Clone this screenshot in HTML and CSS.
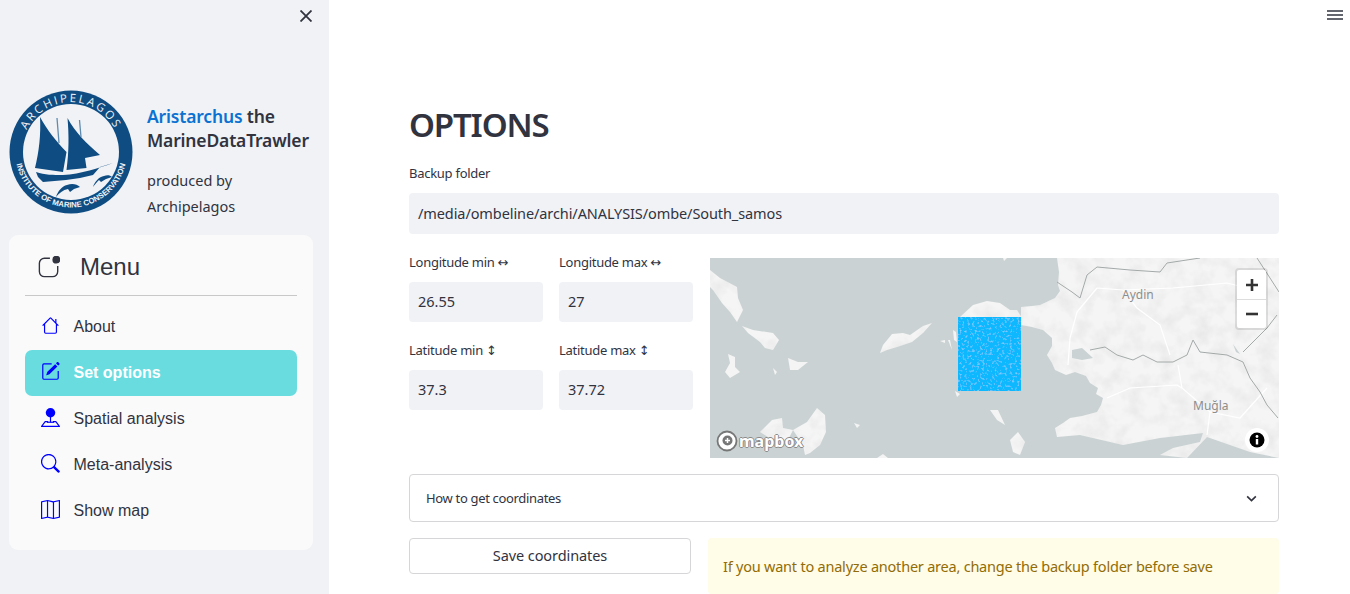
FILE: index.html
```html
<!DOCTYPE html>
<html lang="en">
<head>
    <meta charset="UTF-8">
    <title>Aristarchus</title>
    <link rel="stylesheet" href="styles.css">
</head>
<body>
    <div class="app">
        <aside class="sidebar">
            <div class="side-top">
                <svg class="close" viewBox="0 0 12 12"><path d="M.5 .5 L11.500 11.500 M11.500 .5 L.5 11.500"/></svg>
            </div>
            <div class="brand">
                <svg class="logo" viewBox="0 0 124 124">
                    <defs>
                        <path id="arcTop" d="M13.800 70 A49 49 0 1 1 110.200 70"/>
                        <path id="arcBottom" d="M7 72 A56 56 0 0 0 117 72"/>
                    </defs>
                    <circle cx="62" cy="62" r="61.500" fill="#0e4c82"/>
                    <circle cx="62" cy="62" r="48" fill="#f0f2f6"/>
                    <text class="logo-top"><textPath href="#arcTop" startOffset="50%" text-anchor="middle">ARCHIPELAGOS</textPath></text>
                    <text class="logo-bottom"><textPath href="#arcBottom" startOffset="50%" text-anchor="middle">INSTITUTE OF MARINE CONSERVATION</textPath></text>
                    <path fill="#0e4c82" d="M31 27 C38 40 48 52 57.500 62 L54 82 L26 78 C30 62 32 45 31 27Z"/>
                    <path fill="#0e4c82" d="M58.500 28 C66 42 78 54 91 65 L76 68 L77.500 78 L57.500 80 C60 62 60 45 58.500 28Z"/>
                    <path d="M48 28 L50 53 M70.500 30 L72 47" stroke="#5f8bb0" stroke-width="1.300" fill="none"/>
                    <path fill="#0e4c82" d="M27 82 C36 85 44 85 54 85 C72 84 90 78 104 73 L91 77 L84 85 L71 88 L57 90 L34 92 L29 87Z"/>
                    <path fill="#0e4c82" d="M47 107 C49 101 53 96 58 95 C63 93 68 94 71 97 L65 99 L61 102 L59 99 C54 100 50 103 47 107Z"/>
                    <path fill="#0e4c82" d="M84 97 C86 91 90 87 95 86 C98 85 101 85 103 87 L97 89 L92 92 L90 90 C88 92 86 94 84 97Z"/>
                </svg>
                <div class="brand-text">
                    <h4><span class="blue">Aristarchus</span> <span>the</span><br><span>MarineDataTrawler</span></h4>
                    <p>produced by Archipelagos</p>
                </div>
            </div>
            <nav class="menu">
                <div class="menu-title">
                    <svg class="menu-icon" viewBox="0 0 24 24"><path d="M13 2.500 H7 A5.500 5.500 0 0 0 1.500 8 V17 A5.500 5.500 0 0 0 7 22.500 H16 A5.500 5.500 0 0 0 21.500 17 V11"/><circle cx="20" cy="4" r="4.300" class="dot"/></svg>
                    <span>Menu</span>
                </div>
                <hr class="menu-line">
                <a class="item">
                    <svg viewBox="0 0 16 16"><path d="M8.700 1.500a1 1 0 0 0-1.400 0L1 7.800l.7.7.8-.8V13.500A1.500 1.500 0 0 0 4 15h8a1.500 1.500 0 0 0 1.500-1.500V7.700l.8.8.7-.7-2-2V2.500h-1v2.300ZM12.500 6.700V13.500a.5.5 0 0 1-.5.5H4a.5.5 0 0 1-.5-.5V6.700L8 2.200Z"/></svg>
                    <span>About</span>
                </a>
                <a class="item active">
                    <svg viewBox="0 0 16 16"><path d="M15.500 1.200a.6.6 0 0 1 0 .8l-1 1-1.900-1.900 1-1a.6.6 0 0 1 .8 0ZM13.800 3.700 11.900 1.800 5.400 8.300a.5.5 0 0 0-.1.200l-.8 2.300c-.06.2.13.400.3.300l2.300-.8a.5.5 0 0 0 .2-.1Z"/><path d="M1 13.500A1.500 1.500 0 0 0 2.500 15h11a1.500 1.500 0 0 0 1.500-1.500v-6h-1v6a.5.5 0 0 1-.5.5h-11a.5.5 0 0 1-.5-.5v-11a.5.5 0 0 1 .5-.5H9V1H2.500A1.500 1.500 0 0 0 1 2.500Z"/></svg>
                    <span>Set options</span>
                </a>
                <a class="item">
                    <svg viewBox="0 0 16 16"><circle cx="8" cy="4" r="4"/><path d="M7.500 7h1v5h-1Z"/><path d="M3.100 11.200a.5.5 0 0 1 .4-.2H6v1H3.750L1.500 15h13l-2.250-3H10v-1h2.500a.5.5 0 0 1 .4.2l3 4a.5.5 0 0 1-.4.8H.5a.5.5 0 0 1-.4-.8Z"/><path d="M5 11.500h6v1H5Z"/></svg>
                    <span>Spatial analysis</span>
                </a>
                <a class="item">
                    <svg viewBox="0 0 16 16"><path d="M11.700 10.300a6.500 6.500 0 1 0-1.400 1.400l3.900 3.850a1 1 0 0 0 1.400-1.400l-3.900-3.850ZM12 6.500a5.500 5.500 0 1 1-11 0 5.500 5.500 0 0 1 11 0Z"/></svg>
                    <span>Meta-analysis</span>
                </a>
                <a class="item">
                    <svg viewBox="0 0 16 16"><path d="M15.800.1a.5.5 0 0 1 .2.4v14a.5.5 0 0 1-.4.5l-5 1a.5.5 0 0 1-.2 0L5.500 15 .6 16a.5.5 0 0 1-.6-.5v-14a.5.5 0 0 1 .4-.5l5-1a.5.5 0 0 1 .2 0l4.900 1 4.900-1a.5.5 0 0 1 .4.1ZM10 2 6 1.100v13L10 15ZM11 15l4-.8V1.100l-4 .8ZM5 14.100v-13l-4 .8v13Z"/></svg>
                    <span>Show map</span>
                </a>
            </nav>
        </aside>

        <main class="main">
            <svg class="burger" viewBox="0 0 16 12"><path d="M0 2H16M0 6H16M0 10H16"/></svg>
            <h1>OPTIONS</h1>
            <label class="field-label">Backup folder</label>
            <div class="input wide">/media/ombeline/archi/ANALYSIS/ombe/South_samos</div>

            <div class="coords">
                <div class="coord-form">
                    <div class="field">
                        <label class="field-label">Longitude min <span class="arrow">↔</span></label>
                        <div class="input">26.55</div>
                    </div>
                    <div class="field">
                        <label class="field-label">Longitude max <span class="arrow">↔</span></label>
                        <div class="input">27</div>
                    </div>
                    <div class="field">
                        <label class="field-label">Latitude min <span class="arrow">↕</span></label>
                        <div class="input">37.3</div>
                    </div>
                    <div class="field">
                        <label class="field-label">Latitude max <span class="arrow">↕</span></label>
                        <div class="input">37.72</div>
                    </div>
                </div>
                <div class="map">
                    <svg class="map-svg" viewBox="0 0 569 200">
                        <defs>
                            <filter id="hills" x="0" y="0" width="100%" height="100%">
                                <feTurbulence type="fractalNoise" baseFrequency="0.06" numOctaves="3" seed="7"/>
                                <feColorMatrix values="0 0 0 0 0.55  0 0 0 0 0.55  0 0 0 0 0.55  0.6 0 0 0 -0.24"/>
                                <feComposite in2="SourceAlpha" operator="in" result="shade"/>
                                <feMerge><feMergeNode in="SourceGraphic"/><feMergeNode in="shade"/></feMerge>
                            </filter>
                            <filter id="speck" x="0" y="0" width="100%" height="100%">
                                <feTurbulence type="fractalNoise" baseFrequency="0.4" numOctaves="2" seed="3"/>
                                <feColorMatrix values="0 0 0 0 1  0 0 0 0 1  0 0 0 0 1  0.8 0 0 0 -0.44"/>
                                <feComposite in2="SourceAlpha" operator="in" result="dots"/>
                                <feMerge><feMergeNode in="SourceGraphic"/><feMergeNode in="dots"/></feMerge>
                            </filter>
                            <filter id="soft"><feGaussianBlur stdDeviation="0.4"/></filter>
                        </defs>
                        <rect width="569" height="200" fill="#cad2d3"/>
                        <!-- mainland -->
                        <g filter="url(#hills)">
                            <path fill="#f5f5f5" d="M347 0 L569 0 L569 200 L540 194 L497 179 L477 200 L450 197 L463 190 L490 184 L493 175 L450 180 L413 187 L370 177 L347 179 L345 170 L353 165 L360 160 L372 158 L387 154 L391 147 L393 140 L386 136 L388 130 L380 125 L376 118 L365 114 L356 117 L345 112 L342 105 L337 97 L342 88 L342 80 L333 72 L322 69 L311 67 L311 49 L322 48 L330 47 L345 40 L350 33 L348 27 L349 14Z"/>
                            <path fill="#f5f5f5" d="M250 59 L263 47 L277 43 L290 45 L300 52 L307 52 L312 60Z"/>
                            <path fill="#f5f5f5" d="M0 12 L10 20 L27 29 L28 40 L33 52 L27 64 L20 54 L12 45 L3 32 L0 29Z"/>
                            <path fill="#f5f5f5" d="M32 68 L43 72 L63 75 L69 82 L63 92 L55 90 L50 84 L38 75Z"/>
                            <path fill="#f5f5f5" d="M170 95 L173 87 L182 76 L193 75 L200 77 L213 68 L222 65 L213 75 L202 84 L187 89 L177 92Z"/>
                            <path fill="#f5f5f5" d="M95 197 L93 187 L83 172 L97 164 L107 150 L115 157 L116 174 L110 187 L100 195Z"/>
                            <path fill="#f5f5f5" d="M50 174 L62 162 L72 160 L73 170 L83 172 L77 184 L58 179Z"/>
                            <path fill="#f5f5f5" d="M300 182 L308 174 L315 184 L310 197 L303 194Z"/>
                        </g>
                        <path fill="#f4f4f4" d="M18 96 L25 99 L25 109 L30 114 L20 120 L15 114 L20 105Z"/>
                        <path fill="#f4f4f4" d="M78 100 L88 104 L98 104 L88 112 L80 112Z M63 110 L67 114 L65 117Z"/>
                        <path fill="#f4f4f4" d="M230 83 L235 82 L235 85Z M238 82 L240 82 L242 92Z M243 72 L246 74 L247 84 L244 82Z"/>
                        <path fill="#f4f4f4" d="M144 165 L150 167 L147 170Z M167 200 L173 196 L178 200Z M293 0 L297 0 L294 3Z"/>
                        <path fill="#f4f4f4" d="M280 152 L288 152 L295 167 L287 162Z M245 133 L250 136 L247 139Z"/>
                        <path fill="#cad2d3" d="M362 92 L372 90 L383 100 L372 102 L362 100Z M523 86 L530 96 L526 94Z"/>
                        <!-- roads and borders -->
                        <g filter="url(#soft)">
                            <path fill="none" stroke="#ffffff" stroke-width="1.200" d="M387 30 L413 32 L427 50 L450 67 L460 97 M463 30 L517 25 L545 32 M413 32 L463 30 M367 54 L360 80 L358 107 M387 30 L367 54 M468 107 L472 130 L500 154 L497 177 M397 140 L420 130 L467 127 L472 130 M500 154 L530 160 L557 130"/>
                            <path fill="none" stroke="#a4a9a9" stroke-width="1" d="M347 24 L362 34 L370 40 L377 17 L387 9 L420 12 L450 14 L457 5 L490 0 M547 0 L560 20 L569 34 M380 92 L395 89 L407 97 L423 102 L433 97 L447 104 L463 104 L477 97 L483 82 L490 94 L517 97 L533 104 L540 120 L550 134 L557 147 L568 160 M533 94 L557 70 L567 57"/>
                        </g>
                        <!-- survey area -->
                        <rect x="248" y="59" width="63" height="74" fill="#08b8ff" filter="url(#speck)"/>
                        <text class="city" x="412" y="41">Aydin</text>
                        <text class="city" x="483" y="152">Muğla</text>
                    </svg>
                    <div class="zoom">
                        <div class="zoom-btn"><svg viewBox="0 0 12 12"><path d="M0 6H12M6 0V12"/></svg></div>
                        <div class="zoom-btn"><svg viewBox="0 0 12 12"><path d="M0 6H12"/></svg></div>
                    </div>
                    <div class="mapbox">
                        <svg viewBox="0 0 22 22"><circle cx="11" cy="11" r="9.500" fill="#fff" stroke="#777" stroke-width="1.800"/><circle cx="11.500" cy="10.500" r="5" fill="#777"/><path d="M11.500 8v5M9 10.500h5" stroke="#fff" stroke-width="1.500"/></svg>
                        <span>mapbox</span>
                    </div>
                    <div class="map-info">
                        <svg viewBox="0 0 20 20"><circle cx="10" cy="10" r="7.500" fill="#000"/><rect x="8.800" y="9" width="2.400" height="5.500" fill="#fff"/><circle cx="10" cy="6.500" r="1.400" fill="#fff"/></svg>
                    </div>
                </div>
            </div>

            <div class="expander">
                <span>How to get coordinates</span>
                <svg viewBox="0 0 12 12"><path d="M2 4 L6 8 L10 4"/></svg>
            </div>

            <div class="actions">
                <button class="save" type="button">Save coordinates</button>
                <div class="notice">If you want to analyze another area, change the backup folder before save</div>
            </div>
        </main>
    </div>
</body>
</html>
```

FILE: styles.css
```css
* {
    box-sizing: border-box;
    margin: 0;
    padding: 0;
}
html, body {
    height: 100%;
    overflow: hidden;
    background: white;
    font-family: "Noto Sans", sans-serif;
    color: #31333f;
}
.app {
    display: flex;
    height: 594px;
}

/* sidebar */
.sidebar {
    width: 329px;
    flex: none;
    background: #f0f2f6;
    padding: 0 16px 0 9px;
}
.side-top {
    height: 90px;
    display: flex;
    justify-content: flex-end;
    padding-top: 10px;
}
.close {
    width: 12px;
    height: 12px;
    margin-right: 1px;
}
.close path {
    stroke: #31333f;
    stroke-width: 1.800;
    fill: none;
}
.brand {
    display: flex;
    gap: 14px;
    height: 145px;
}
.logo {
    width: 124px;
    height: 124px;
    flex: none;
}
.logo-top {
    font: 400 11.500px "Open Sans", sans-serif;
    fill: #f0f2f6;
    letter-spacing: 2.200px;
}
.logo-bottom {
    font: bold 7.800px "Liberation Sans", sans-serif;
    fill: #f0f2f6;
}
.brand-text h4 {
    font-size: 17.500px;
    font-weight: 600;
    line-height: 24px;
    margin-top: 14px;
    letter-spacing: -0.17px;
}
.blue {
    color: #0b72d1;
}
.brand-text p {
    font-size: 14.500px;
    line-height: 26px;
    margin-top: 15px;
    width: 110px;
}
.menu {
    width: 304px;
    height: 315px;
    background: #fafafa;
    border-radius: 9px;
    padding: 16px;
    font-family: "Liberation Sans", sans-serif;
}
.menu-title {
    display: flex;
    align-items: center;
    gap: 20px;
    height: 31px;
    padding-left: 13px;
    font-size: 24px;
}
.menu-icon {
    width: 22px;
    height: 22px;
}
.menu-icon path {
    fill: none;
    stroke: #31333f;
    stroke-width: 1.500;
}
.menu-icon .dot {
    fill: #31333f;
}
.menu-line {
    border: 0;
    border-top: 1px solid #c8c8c8;
    margin: 13px 0 8px;
}
.item {
    display: flex;
    align-items: center;
    gap: 13px;
    height: 46px;
    padding-left: 16px;
    font-size: 16px;
    border-radius: 7px;
}
.item svg {
    width: 19px;
    height: 19px;
    fill: blue;
    margin-top: -4px;
}
.item span {
    margin-left: 0.5px;
}
.item.active {
    background: #69dce0;
    color: white;
    font-weight: bold;
}

/* main */
.main {
    flex: 1;
    padding: 0 71px 0 80px;
    position: relative;
}
.burger {
    position: absolute;
    top: 9px;
    right: 7px;
    width: 16px;
    height: 12px;
}
.burger path {
    stroke: #31333f;
    stroke-width: 1.500;
    fill: none;
}
h1 {
    font-size: 33px;
    font-weight: 600;
    line-height: 44px;
    margin-top: 103px;
    letter-spacing: -1.15px;
}
.field-label {
    display: block;
    font-size: 13px;
    line-height: 18px;
    margin-top: 17px;
    letter-spacing: -0.27px;
}
.arrow {
    font: 13px "DejaVu Sans", sans-serif;
}
.input {
    background: #f0f2f6;
    border-radius: 4px;
    height: 40px;
    line-height: 39px;
    padding-left: 9px;
    font-size: 14.500px;
    margin-top: 11px;
}
.input.wide {
    height: 41px;
    line-height: 41px;
    letter-spacing: -0.09px;
}
.coords {
    display: flex;
    margin-top: 24px;
    gap: 17px;
}
.coord-form {
    width: 284px;
    flex: none;
    display: grid;
    grid-template-columns: 134px 134px;
    column-gap: 16px;
    row-gap: 19px;
    align-content: start;
    margin-top: -5px;
}
.coord-form .field-label {
    margin-top: 0;
}
.map {
    flex: 1;
    height: 200px;
    position: relative;
}
.map-svg {
    display: block;
    width: 100%;
    height: 100%;
}
.city {
    font: 12px "Noto Sans", sans-serif;
    fill: #8d8d8d;
}
.zoom {
    position: absolute;
    top: 12px;
    right: 13px;
    width: 29px;
    background: white;
    border-radius: 2px;
    box-shadow: 0 0 0 2px rgba(0, 0, 0, 0.1);
}
.zoom-btn {
    height: 29px;
    display: flex;
    align-items: center;
    justify-content: center;
}
.zoom-btn + .zoom-btn {
    border-top: 1px solid #ddd;
}
.zoom-btn svg {
    width: 12px;
    height: 12px;
}
.zoom-btn path {
    stroke: #333;
    stroke-width: 2.600;
    fill: none;
}
.mapbox {
    position: absolute;
    left: 6px;
    bottom: 6px;
    display: flex;
    align-items: center;
    gap: 1px;
    color: white;
    font: bold 16px "Noto Sans", sans-serif;
    text-shadow: 1px 0 #8a8a8a, -1px 0 #8a8a8a, 0 1px #8a8a8a, 0 -1px #8a8a8a;
}
.mapbox svg {
    width: 22px;
    height: 22px;
}
.map-info {
    position: absolute;
    right: 10px;
    bottom: 6px;
    width: 24px;
    height: 24px;
    border-radius: 50%;
    background: white;
    padding: 2px;
}
.map-info svg {
    display: block;
}
.expander {
    margin-top: 16px;
    height: 48px;
    border: 1px solid #d6d6d8;
    border-radius: 4px;
    display: flex;
    align-items: center;
    justify-content: space-between;
    padding: 0 20px 0 16px;
    font-size: 13px;
    letter-spacing: -0.33px;
}
.expander svg {
    width: 13px;
    height: 13px;
}
.expander path {
    stroke: #31333f;
    stroke-width: 1.500;
    fill: none;
}
.actions {
    display: flex;
    margin-top: 16px;
    gap: 17px;
    align-items: flex-start;
}
.save {
    width: 282px;
    height: 36px;
    background: white;
    border: 1px solid #d6d6d8;
    border-radius: 4px;
    font: 14.500px "Noto Sans", sans-serif;
    letter-spacing: -0.08px;
    color: #31333f;
    padding-bottom: 3px;
}
.notice {
    flex: 1;
    height: 56px;
    background: #fffce7;
    color: #926c05;
    border-radius: 4px;
    padding: 17px 15px;
    font-size: 14.500px;
    line-height: 22px;
    letter-spacing: -0.22px;
}
```
